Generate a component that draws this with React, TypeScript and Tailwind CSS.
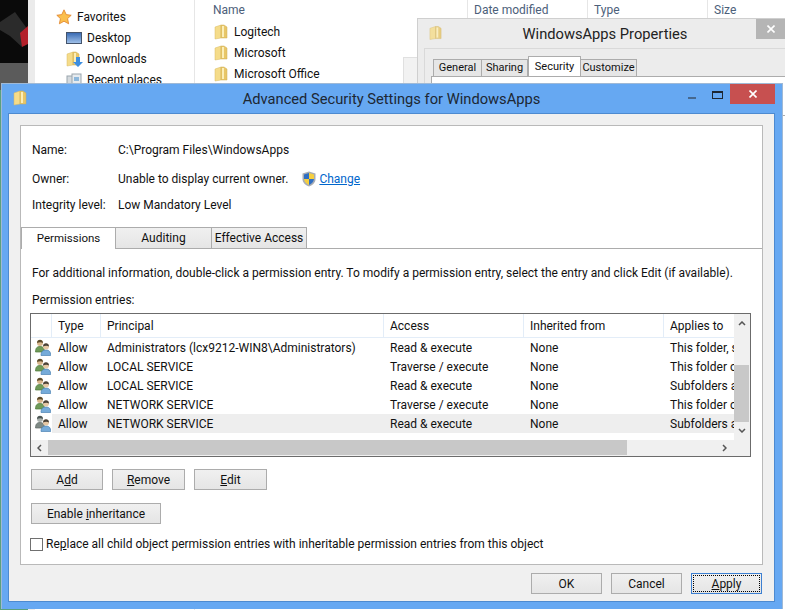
import type { ReactNode } from "react";

const rows = [
  { type: "Allow", principal: "Administrators (lcx9212-WIN8\\Administrators)", access: "Read & execute", from: "None", applies: "This folder, subfolders" },
  { type: "Allow", principal: "LOCAL SERVICE", access: "Traverse / execute", from: "None", applies: "This folder only" },
  { type: "Allow", principal: "LOCAL SERVICE", access: "Read & execute", from: "None", applies: "Subfolders and" },
  { type: "Allow", principal: "NETWORK SERVICE", access: "Traverse / execute", from: "None", applies: "This folder only" },
  { type: "Allow", principal: "NETWORK SERVICE", access: "Read & execute", from: "None", applies: "Subfolders and" },
];

function Folder({ className = "" }: { className?: string }) {
  return (
    <svg viewBox="0 0 14 16" className={className}>
      <path d="M1 3 L7 1 V14 L1 15 Z" fill="#f5dc8a" stroke="#d9bb62" strokeWidth="0.5" />
      <path d="M7 1 H10 L13 3 V14 H7 Z" fill="#e8c668" stroke="#cfae55" strokeWidth="0.5" />
      <path d="M8 2 H10 V13 H8 Z" fill="#fbeeb8" />
    </svg>
  );
}

function Users({ muted = false }: { muted?: boolean }) {
  const back = muted ? "#7f8a86" : "#6f9a58";
  const hair = muted ? "#4c5654" : "#5b4a2a";
  const face = muted ? "#a9b0ad" : "#d9b78c";
  return (
    <svg viewBox="0 0 16 17" className="w-4 h-[17px] shrink-0">
      <path d="M0.5 13 C0.5 9 2 7.5 5 7.5 C8 7.5 9.5 9 9.5 13 Z" fill={back} stroke={muted ? "#5f6966" : "#4f7a3b"} strokeWidth="0.7" />
      <circle cx="5" cy="4" r="3" fill={face} />
      <path d="M2 4 C2 1.5 3.5 0.8 5 0.8 C6.5 0.8 8 1.5 8 4 C6.5 3 4 3 2 4 Z" fill={hair} />
      <path d="M6 16.5 C6 12.5 8 11 11 11 C14 11 15.7 12.5 15.7 16.5 Z" fill="#76abd9" stroke="#4c82b3" strokeWidth="0.7" />
      <circle cx="11" cy="7.5" r="3" fill="#e6c8a4" />
      <path d="M8 7.5 C8 5 9.5 4.3 11 4.3 C12.5 4.3 14 5 14 7.5 C12.5 6.5 10 6.5 8 7.5 Z" fill="#4a4238" />
    </svg>
  );
}

function Shield() {
  return (
    <svg viewBox="0 0 14 16" className="w-[14px] h-4 shrink-0">
      <path d="M7 0.5 L13.5 2.5 V8 C13.5 12 10 14.5 7 15.5 C4 14.5 0.5 12 0.5 8 V2.5 Z" fill="#a9adb3" />
      <path d="M7 2 V8 H2 V3.5 Z" fill="#2f6fc4" />
      <path d="M7 2 L12 3.5 V8 H7 Z" fill="#f6cf3f" />
      <path d="M2 8 H7 V14 C4.5 13 2.5 11 2 8 Z" fill="#f6cf3f" />
      <path d="M7 8 H12 C11.5 11 9.5 13 7 14 Z" fill="#2f6fc4" />
    </svg>
  );
}

function Btn({ children, w, focused = false }: { children: ReactNode; w: string; focused?: boolean }) {
  return (
    <div
      className={`${w} h-[21px] flex items-center justify-center bg-linear-to-b from-[#f0f0f0] to-[#e5e5e5] border ${
        focused ? "border-[#3c7fd1] p-px" : "border-[#acacac]"
      }`}
    >
      <div className={`w-full h-full flex items-center justify-center ${focused ? "border border-dotted border-black" : ""}`}>
        {children}
      </div>
    </div>
  );
}

function FolderRow({ name }: { name: string }) {
  return (
    <div className="h-[21px] flex items-center gap-[6px]">
      <Folder className="w-[14px] h-4" />
      <span>{name}</span>
    </div>
  );
}

export default function App() {
  return (
    <div className="relative w-[785px] h-[610px] overflow-hidden bg-white text-[12px] leading-4 text-[#111] font-['Roboto',sans-serif]">
      {/* wallpaper + explorer behind */}
      <div className="absolute left-0 top-0 w-[28px] h-[610px] bg-[#5aa07f] overflow-hidden">
        <svg viewBox="0 0 28 90" className="w-[28px] h-[90px]">
          <rect width="28" height="90" fill="#0a0a0a" />
          <path d="M0 22 L15 12 L28 30 L22 47 L10 36 L0 30 Z" fill="#2b2b2b" />
          <path d="M20 33 L28 26 L28 44 L22 47 Z" fill="#b3202a" />
          <rect y="63" width="28" height="27" fill="#5b5b5b" />
        </svg>
      </div>
      <div className="absolute left-[28px] top-0 w-[757px] h-[610px] bg-white border-l-[7px] border-[#ebebeb] flex">
        <div className="w-[160px] h-full border-r border-[#e6e6e6] pl-[21px] pt-[7px]">
          <div className="h-5 flex items-center gap-[5px]">
            <svg viewBox="0 0 20 20" className="w-4 h-4">
              <path d="M10 1 L12.8 7 L19 7.8 L14.5 12 L15.8 18.5 L10 15.3 L4.2 18.5 L5.5 12 L1 7.8 L7.2 7 Z" fill="#fbbf4d" stroke="#e0812a" />
            </svg>
            <span>Favorites</span>
          </div>
          <div className="pl-[10px]">
            <div className="h-[21px] flex items-center gap-[5px]">
              <div className="w-4 h-3 bg-linear-to-b from-[#3b6cb4] to-[#9fc0e8] border border-[#44546c]" />
              <span>Desktop</span>
            </div>
            <div className="h-[21px] flex items-center gap-[5px]">
              <div className="relative">
                <Folder className="w-[14px] h-4" />
                <svg viewBox="0 0 10 10" className="absolute -right-[3px] bottom-0 w-[10px] h-[10px]">
                  <path d="M3 0 H7 V5 H10 L5 10 L0 5 H3 Z" fill="#3d8ee0" />
                </svg>
              </div>
              <span className="ml-[2px]">Downloads</span>
            </div>
            <div className="h-[21px] flex items-center gap-[5px]">
              <svg viewBox="0 0 16 14" className="w-4 h-[14px]">
                <rect x="1" y="3" width="6" height="10" fill="#d5dade" stroke="#9aa5ad" />
                <rect x="6" y="1" width="9" height="12" fill="#e6ebef" stroke="#9aa5ad" />
                <rect x="8" y="4" width="5" height="4" fill="#8db8dc" />
              </svg>
              <span>Recent places</span>
            </div>
          </div>
        </div>
        <div className="flex-1">
          <div className="flex h-[20px] items-center text-[#4c607a]">
            <div className="w-[272px] pl-[18px]">Name</div>
            <div className="w-[120px] h-full flex items-center border-l border-[#e6e6e6] pl-[6px]">Date modified</div>
            <div className="w-[120px] h-full flex items-center border-l border-[#e6e6e6] pl-[6px]">Type</div>
            <div className="h-full flex items-center border-l border-[#e6e6e6] pl-[6px]">Size</div>
          </div>
          <div className="pl-[19px] pt-px">
            <FolderRow name="Logitech" />
            <FolderRow name="Microsoft" />
            <FolderRow name="Microsoft Office" />
          </div>
        </div>
      </div>

      {/* properties window behind */}
      <div className="absolute left-[403px] top-[57px] w-[14px] h-[30px] bg-[#f2f2f2] border-l border-t border-[#e0e0e0]" />
      <div className="absolute left-[417px] top-[18px] w-[380px] h-[80px] bg-[#ececec] border border-[#cfcfcf]">
        <div className="relative h-[29px] flex items-center justify-center pr-[4px] text-[14.7px] text-[#222]">
          <Folder className="absolute left-[11px] top-[6px] w-[13px] h-[16px] opacity-80" />
          <span>WindowsApps Properties</span>
          <div className="absolute left-[338px] top-0 w-[29px] h-5 bg-[#b5b5b5] flex items-center justify-center text-white">
            <svg viewBox="0 0 8 8" className="w-2 h-2"><path d="M0.5 0.5 L7.5 7.5 M7.5 0.5 L0.5 7.5" stroke="#fff" strokeWidth="1.6" /></svg>
          </div>
        </div>
        <div className="ml-[6px] h-[50px] bg-[#ececec] border-l border-t border-[#d9d9d9] pl-[8px] pt-[5px] text-[11px]">
          <div className="flex items-end h-[22px]">
            <div className="w-[49px] h-[17px] bg-[#e6e6e6] border border-b-0 border-[#acacac] flex items-center justify-center">General</div>
            <div className="w-[46px] h-[17px] bg-[#e6e6e6] border border-l-0 border-b-0 border-[#acacac] flex items-center justify-center">Sharing</div>
            <div className="w-[53px] h-[20px] bg-white border border-b-0 border-[#acacac] flex items-center justify-center">Security</div>
            <div className="w-[56px] h-[17px] bg-[#e6e6e6] border border-l-0 border-b-0 border-[#acacac] flex items-center justify-center">Customize</div>
          </div>
          <div className="-ml-[2px] h-10 bg-white border border-[#acacac]" />
        </div>
      </div>

      {/* advanced security dialog */}
      <div className="absolute left-[1px] top-[83px] w-[782px] h-[526px] bg-[#66a8f2] border-t border-l border-r border-[#9fb9d6] pl-[6px] pr-[7px] pb-[7px] flex flex-col">
        <div className="relative h-[29px] shrink-0 flex items-center justify-center pt-px text-[14.7px] text-[#1d2733]">
          <Folder className="absolute left-[5px] top-[6px] w-[14px] h-4" />
          <span>Advanced Security Settings for WindowsApps</span>
          <div className="absolute left-[680px] top-[13px] w-[8px] h-[2px] bg-[#46688f]" />
          <div className="absolute left-[704px] top-[7px] w-[11px] h-[8px] border border-t-2 border-[#1d2733]" />
          <div className="absolute left-[722px] top-0 w-[45px] h-5 bg-[#c75050] flex items-center justify-center">
            <svg viewBox="0 0 8 8" className="w-2 h-2"><path d="M0.5 0.5 L7.5 7.5 M7.5 0.5 L0.5 7.5" stroke="#fff" strokeWidth="1.6" /></svg>
          </div>
        </div>

        <div className="flex-1 bg-[#f0f0f0] border border-[#4d8ad0] px-[11px] pt-[11px] flex flex-col">
          <div className="h-[440px] bg-white border border-[#b9b9b9] flex flex-col">
            <div className="pl-[11px] pt-[16px]">
              <div className="h-4 flex">
                <span className="w-[86px]">Name:</span>
                <span>C:\Program Files\WindowsApps</span>
              </div>
              <div className="h-4 mt-[13px] flex items-center">
                <span className="w-[86px]">Owner:</span>
                <span>Unable to display current owner.</span>
                <span className="ml-[14px]"><Shield /></span>
                <span className="ml-[3px] text-[#0066cc] underline">Change</span>
              </div>
              <div className="h-4 mt-[10px] flex">
                <span className="w-[86px]">Integrity level:</span>
                <span>Low Mandatory Level</span>
              </div>
            </div>

            <div className="mt-[14px] h-[22px] flex border-b border-[#acacac]">
              <div className="w-[95px] h-[22px] pb-[2px] bg-white border-t border-l border-r border-[#acacac] flex items-center justify-center text-[11.5px]">Permissions</div>
              <div className="w-[96px] h-[21px] bg-linear-to-b from-[#f0f0f0] to-[#e5e5e5] border-t border-r border-[#acacac] flex items-center justify-center">Auditing</div>
              <div className="w-[95px] h-[21px] bg-linear-to-b from-[#f0f0f0] to-[#e5e5e5] border-t border-r border-[#acacac] flex items-center justify-center">Effective Access</div>
            </div>

            <div className="px-[11px] pt-[16px]">
              <p className="h-4 whitespace-nowrap">
                For additional information, double-click a permission entry. To modify a permission entry, select the entry and click Edit (if available).
              </p>
              <p className="h-4 mt-[11px]">Permission entries:</p>
            </div>

            <div className="ml-[9px] mt-[5px] w-[721px] h-[144px] border border-[#6b6b6b] flex flex-col">
              <div className="flex-1 flex min-h-0">
                <div className="w-[703px] flex flex-col overflow-hidden">
                  <div className="h-[24px] shrink-0 grid grid-cols-[21px_49px_283px_140px_140px_70px] border-b border-[#e3edf8]">
                    <div className="border-r border-[#e3edf8]" />
                    <div className="border-r border-[#e3edf8] pl-[6px] flex items-center">Type</div>
                    <div className="border-r border-[#e3edf8] pl-[6px] flex items-center">Principal</div>
                    <div className="border-r border-[#e3edf8] pl-[6px] flex items-center">Access</div>
                    <div className="border-r border-[#e3edf8] pl-[6px] flex items-center">Inherited from</div>
                    <div className="pl-[6px] flex items-center whitespace-nowrap">Applies to</div>
                  </div>
                  {rows.map((r, i) => (
                    <div key={i} className="h-[19px] shrink-0 grid grid-cols-[21px_49px_283px_140px_140px_70px] items-center">
                      <div className="pl-[4px]"><Users muted={i === 4} /></div>
                      <div className={`h-full flex items-center pl-[6px] ${i === 4 ? "bg-[#eeeeee]" : ""}`}>{r.type}</div>
                      <div className={`h-full flex items-center pl-[6px] whitespace-nowrap ${i === 4 ? "bg-[#eeeeee]" : ""}`}>{r.principal}</div>
                      <div className={`h-full flex items-center pl-[6px] ${i === 4 ? "bg-[#eeeeee]" : ""}`}>{r.access}</div>
                      <div className={`h-full flex items-center pl-[6px] ${i === 4 ? "bg-[#eeeeee]" : ""}`}>{r.from}</div>
                      <div className={`h-full flex items-center pl-[6px] whitespace-nowrap overflow-hidden ${i === 4 ? "bg-[#eeeeee]" : ""}`}>{r.applies}</div>
                    </div>
                  ))}
                </div>
                <div className="w-[16px] bg-[#f0f0f0] relative flex flex-col items-center justify-between pt-[7px] pb-[5px]">
                  <svg viewBox="0 0 8 5" className="w-2 h-[5px]"><path d="M1 4 L4 1 L7 4" fill="none" stroke="#555" strokeWidth="1.5" /></svg>
                  <div className="absolute left-0 top-[51px] w-[15px] h-[57px] bg-[#c8c8c8]" />
                  <svg viewBox="0 0 8 5" className="w-2 h-[5px] mb-[2px]"><path d="M1 1 L4 4 L7 1" fill="none" stroke="#555" strokeWidth="1.5" /></svg>
                </div>
              </div>
              <div className="h-[16px] shrink-0 flex items-center bg-[#f0f0f0]">
                <div className="w-[17px] flex justify-center">
                  <svg viewBox="0 0 5 8" className="w-[5px] h-2"><path d="M4 1 L1 4 L4 7" fill="none" stroke="#555" strokeWidth="1.5" /></svg>
                </div>
                <div className="w-[579px] h-[15px] self-start bg-[#c8c8c8]" />
                <div className="flex-1 flex justify-end pr-[23px]">
                  <svg viewBox="0 0 5 8" className="w-[5px] h-2"><path d="M1 1 L4 4 L1 7" fill="none" stroke="#555" strokeWidth="1.5" /></svg>
                </div>
              </div>
            </div>

            <div className="ml-[10px] mt-[12px] flex gap-[9px]">
              <Btn w="w-[72px]"><span>A<u>d</u>d</span></Btn>
              <Btn w="w-[73px]"><span><u>R</u>emove</span></Btn>
              <Btn w="w-[73px]"><span><u>E</u>dit</span></Btn>
            </div>
            <div className="ml-[10px] mt-[13px]">
              <Btn w="w-[130px]"><span>Enable <u>i</u>nheritance</span></Btn>
            </div>
            <div className="ml-[9px] mt-[12px] flex items-start gap-[3px]">
              <div className="w-[13px] h-[13px] mt-[2px] bg-white border border-[#707070]" />
              <span>Re<u>p</u>lace all child object permission entries with inheritable permission entries from this object</span>
            </div>
          </div>

          <div className="flex justify-end gap-[9px] pt-[8px] pr-[1px]">
            <Btn w="w-[71px]"><span>OK</span></Btn>
            <Btn w="w-[71px]"><span>Cancel</span></Btn>
            <Btn w="w-[71px]" focused><span><u>A</u>pply</span></Btn>
          </div>
        </div>
      </div>
    </div>
  );
}
